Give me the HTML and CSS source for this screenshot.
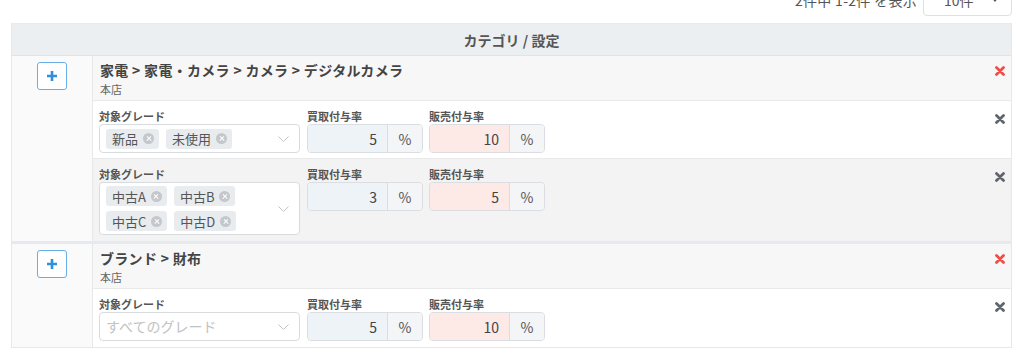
FILE: index.html
```html
<!DOCTYPE html>
<html lang="ja">
<head>
<meta charset="utf-8">
<link rel="stylesheet" href="styles.css">
</head>
<body>
<div class="pager">
  <span class="pager-info">2件中 1-2件 を表示</span>
  <div class="pager-select"><span>10件</span><svg class="caret" width="8" height="5" viewBox="0 0 8 5"><path d="M0 0h8L4 5z" fill="#555"/></svg></div>
</div>
<div class="table">
  <div class="thead">カテゴリ / 設定</div>

  <div class="cat">
    <div class="cat-left"><button class="plus"><svg width="12" height="12" viewBox="0 0 12 12"><path d="M6 1v10M1 6h10" stroke="#2f8fdc" stroke-width="2.6"/></svg></button></div>
    <div class="cat-body">
      <div class="cat-head">
        <div>
          <div class="cat-title">家電 &gt; 家電・カメラ &gt; カメラ &gt; デジタルカメラ</div>
          <div class="cat-shop">本店</div>
        </div>
        <svg class="del" width="10" height="10" viewBox="0 0 10 10"><path d="M1.5 1.5l7 7M8.5 1.5l-7 7" stroke="#ef4e47" stroke-width="2.8" stroke-linecap="round"/></svg>
      </div>
      <div class="grade">
        <div class="field f-grade">
          <div class="label">対象グレード</div>
          <div class="select">
            <div class="tags">
              <span class="tag">新品<i class="clr"></i></span>
              <span class="tag">未使用<i class="clr"></i></span>
            </div>
            <svg class="chev" width="11" height="6" viewBox="0 0 11 6"><path d="M0.5 0.5l5 5 5-5" fill="none" stroke="#c4c4c4" stroke-width="1"/></svg>
          </div>
        </div>
        <div class="field f-rate">
          <div class="label">買取付与率</div>
          <div class="igroup"><span class="ival buy">5</span><span class="addon">%</span></div>
        </div>
        <div class="field f-rate">
          <div class="label">販売付与率</div>
          <div class="igroup"><span class="ival sell">10</span><span class="addon">%</span></div>
        </div>
        <svg class="del del-g" width="10" height="10" viewBox="0 0 10 10"><path d="M1.5 1.5l7 7M8.5 1.5l-7 7" stroke="#60656b" stroke-width="2.8" stroke-linecap="round"/></svg>
      </div>
      <div class="grade alt">
        <div class="field f-grade">
          <div class="label">対象グレード</div>
          <div class="select">
            <div class="tags">
              <span class="tag">中古A<i class="clr"></i></span>
              <span class="tag">中古B<i class="clr"></i></span>
              <span class="tag">中古C<i class="clr"></i></span>
              <span class="tag">中古D<i class="clr"></i></span>
            </div>
            <svg class="chev" width="11" height="6" viewBox="0 0 11 6"><path d="M0.5 0.5l5 5 5-5" fill="none" stroke="#c4c4c4" stroke-width="1"/></svg>
          </div>
        </div>
        <div class="field f-rate">
          <div class="label">買取付与率</div>
          <div class="igroup"><span class="ival buy">3</span><span class="addon">%</span></div>
        </div>
        <div class="field f-rate">
          <div class="label">販売付与率</div>
          <div class="igroup"><span class="ival sell">5</span><span class="addon">%</span></div>
        </div>
        <svg class="del del-g" width="10" height="10" viewBox="0 0 10 10"><path d="M1.5 1.5l7 7M8.5 1.5l-7 7" stroke="#60656b" stroke-width="2.8" stroke-linecap="round"/></svg>
      </div>
    </div>
  </div>

  <div class="cat">
    <div class="cat-left"><button class="plus"><svg width="12" height="12" viewBox="0 0 12 12"><path d="M6 1v10M1 6h10" stroke="#2f8fdc" stroke-width="2.6"/></svg></button></div>
    <div class="cat-body">
      <div class="cat-head">
        <div>
          <div class="cat-title">ブランド &gt; 財布</div>
          <div class="cat-shop">本店</div>
        </div>
        <svg class="del" width="10" height="10" viewBox="0 0 10 10"><path d="M1.5 1.5l7 7M8.5 1.5l-7 7" stroke="#ef4e47" stroke-width="2.8" stroke-linecap="round"/></svg>
      </div>
      <div class="grade">
        <div class="field f-grade">
          <div class="label">対象グレード</div>
          <div class="select">
            <div class="placeholder">すべてのグレード</div>
            <svg class="chev" width="11" height="6" viewBox="0 0 11 6"><path d="M0.5 0.5l5 5 5-5" fill="none" stroke="#c4c4c4" stroke-width="1"/></svg>
          </div>
        </div>
        <div class="field f-rate">
          <div class="label">買取付与率</div>
          <div class="igroup"><span class="ival buy">5</span><span class="addon">%</span></div>
        </div>
        <div class="field f-rate">
          <div class="label">販売付与率</div>
          <div class="igroup"><span class="ival sell">10</span><span class="addon">%</span></div>
        </div>
        <svg class="del del-g" width="10" height="10" viewBox="0 0 10 10"><path d="M1.5 1.5l7 7M8.5 1.5l-7 7" stroke="#60656b" stroke-width="2.8" stroke-linecap="round"/></svg>
      </div>
    </div>
  </div>
</div>
</body>
</html>
```

FILE: styles.css
```css
* { box-sizing: border-box; }
html, body { margin: 0; padding: 0; background: #fff; }
body {
  font-family: "Noto Sans CJK JP", "Noto Sans", sans-serif;
  color: #444;
  font-size: 14px;
}
.pager {
  display: flex;
  justify-content: flex-end;
  align-items: center;
  gap: 6px;
  margin-top: -17px;
  margin-right: 12px;
  height: 33px;
}
.pager-info { color: #555; font-size: 14px; letter-spacing: 0.3px; }
.pager-select {
  width: 89px;
  height: 33px;
  border: 1px solid #dcdfe3;
  border-radius: 4px;
  display: flex;
  align-items: center;
  justify-content: space-between;
  padding: 0 12px 0 20px;
  color: #555;
}
.table {
  margin: 7px 12px 0 11px;
  border: 1px solid #e6e8eb;
  border-top: none;
}
.thead {
  height: 33px;
  background: #eceff2;
  border-top: 1px solid #e8eaed;
  border-bottom: 1px solid #e0e3e7;
  display: flex;
  align-items: center;
  justify-content: center;
  font-weight: bold;
  color: #555;
  font-size: 14px;
}
.cat {
  display: grid;
  grid-template-columns: 81px 1fr;
}
.cat + .cat { border-top: 3px solid #e6e9ed; }
.cat-left {
  background: #fafafa;
  border-right: 1px solid #e6e8eb;
  padding-top: 6px;
  display: flex;
  justify-content: center;
  align-items: flex-start;
}
.plus {
  width: 30px;
  height: 28px;
  border: 1px solid #6aaee6;
  border-radius: 3px;
  background: #fff;
  display: flex;
  align-items: center;
  justify-content: center;
  padding: 0;
}
.cat-head {
  height: 45px;
  background: #f7f7f7;
  border-bottom: 1px solid #e9e9e9;
  display: flex;
  justify-content: space-between;
  align-items: flex-start;
  padding: 4px 6px 0 7px;
}
.cat-title {
  font-size: 14px;
  font-weight: bold;
  color: #444;
  line-height: 20px;
  letter-spacing: 0.3px;
}
.cat-shop {
  font-size: 11px;
  color: #666;
  line-height: 16px;
  margin-top: 1px;
}
.del { margin-top: 6px; flex: none; }
.del-g { margin-top: 5px; margin-left: auto; }
.grade {
  display: flex;
  align-items: flex-start;
  padding: 8px 6px 5px 6px;
  background: #fff;
  border-bottom: 1px solid #e9e9e9;
  min-height: 58px;
}
.cat-body .grade:last-child { border-bottom: none; }
.grade.alt { background: #f3f3f3; min-height: 82px; }
.field { display: flex; flex-direction: column; }
.f-grade { width: 201px; margin-right: 7px; }
.f-rate { width: 116px; margin-right: 6px; }
.label {
  font-size: 11px;
  font-weight: bold;
  color: #555;
  line-height: 15px;
}
.select {
  min-height: 29px;
  background: #fff;
  border: 1px solid #d9dcdf;
  border-radius: 4px;
  display: flex;
  align-items: center;
  padding: 3px 10px 3px 6px;
}
.tags {
  display: flex;
  flex-wrap: wrap;
  gap: 5px 7px;
  flex: 1;
}
.tag {
  display: inline-flex;
  align-items: center;
  height: 20px;
  background: #e9ecef;
  border-radius: 3px;
  padding: 0 5px 0 6px;
  font-size: 13px;
  color: #555;
}
.clr {
  width: 11px;
  height: 11px;
  border-radius: 50%;
  background: #c4c7cb;
  margin-left: 5px;
  position: relative;
}
.clr::before, .clr::after {
  content: "";
  position: absolute;
  left: 2.5px;
  top: 5px;
  width: 6px;
  height: 1.4px;
  background: #fff;
  transform: rotate(45deg);
}
.clr::after { transform: rotate(-45deg); }
.placeholder {
  flex: 1;
  color: #c2c2c2;
  font-size: 14px;
  line-height: 21px;
}
.chev { flex: none; margin-left: 6px; }
.igroup {
  display: flex;
  height: 29px;
  border: 1px solid #dadde1;
  border-radius: 4px;
  overflow: hidden;
}
.ival {
  flex: 1;
  display: flex;
  align-items: center;
  justify-content: flex-end;
  padding-right: 10px;
  font-size: 14px;
  color: #444;
}
.ival.buy { background: #eef3f8; }
.ival.sell { background: #fde9e6; }
.addon {
  width: 35px;
  border-left: 1px solid #dadde1;
  background: #f3f5f7;
  display: flex;
  align-items: center;
  justify-content: center;
  color: #555;
  font-size: 14px;
}
```
